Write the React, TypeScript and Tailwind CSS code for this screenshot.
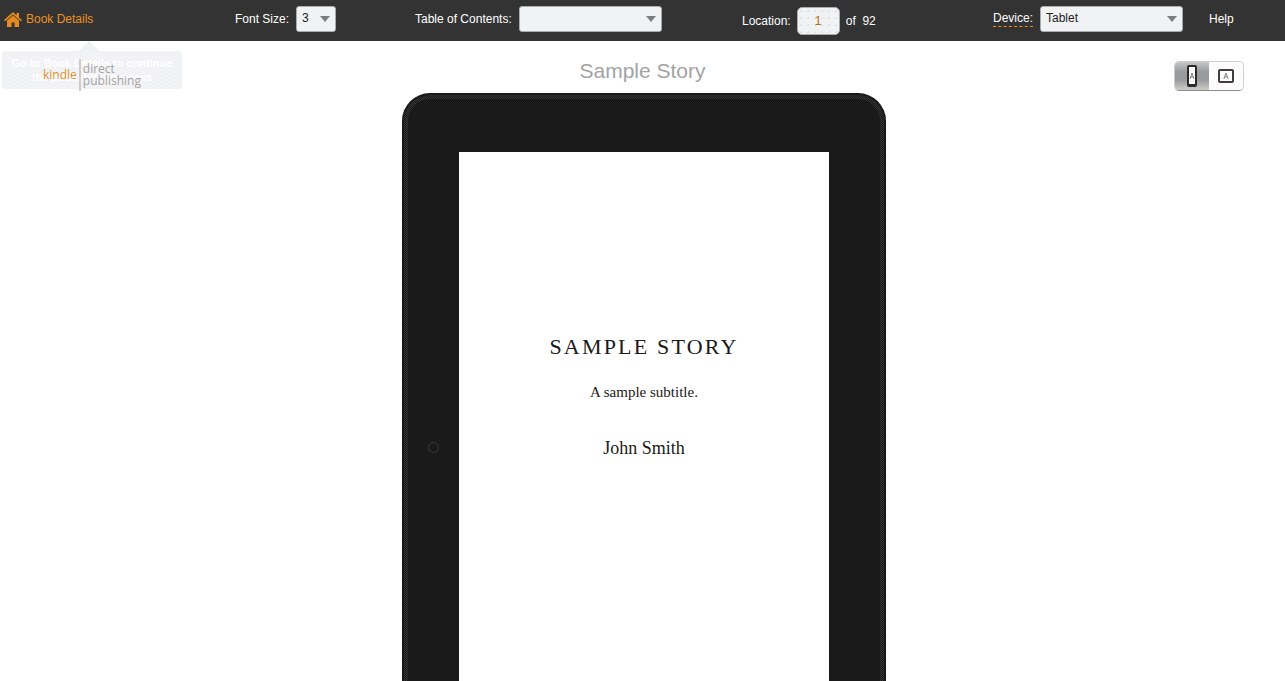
import { useState, type ReactNode } from 'react';

const FIELD =
  'rounded-[3px] border border-[#a9abad] bg-[#f1f2f4] text-[12px] text-[#222] outline-none';

type PickerProps = {
  id: string;
  label: ReactNode;
  width: string;
  options: string[];
};

function Picker({ id, label, width, options }: PickerProps) {
  return (
    <div className="flex items-center gap-[7px] pb-1">
      <label htmlFor={id} className="whitespace-nowrap">
        {label}
      </label>
      <div className={`relative ${width}`}>
        <select id={id} className={`block h-[26px] w-full appearance-none pb-[2px] pl-[5px] leading-4 ${FIELD}`}>
          {options.map((option) => (
            <option key={option}>{option}</option>
          ))}
        </select>
        <svg
          viewBox="0 0 10 6"
          className="pointer-events-none absolute top-[10px] right-[6px] h-[6px] w-[10px]"
          aria-hidden="true"
        >
          <path d="M0 0h10L5 6z" fill="#7d7d7f" />
        </svg>
      </div>
    </div>
  );
}

function HomeIcon() {
  return (
    <svg viewBox="0 0 18 15" className="h-[15px] w-[18px]" fill="#e38b1f" aria-hidden="true">
      <path d="M9 0l3.6 3.2V1H15v4.4L18 8l-1.2 1.2L9 2.4 1.2 9.2 0 8z" />
      <path d="M9 3.4l6 5.2V15h-4.4v-4.4H7.6V15H3V8.6z" />
    </svg>
  );
}

function Toolbar() {
  return (
    <header className="grid h-[41px] grid-cols-[235fr_180fr_327fr_251fr_216fr_76fr] items-center bg-[#333] text-[12px] text-white">
      <a href="#details" className="flex items-center gap-1 pb-[3px] pl-1 text-[#ec9222]">
        <HomeIcon />
        Book Details
      </a>
      <Picker id="font-size" label="Font Size:" width="w-10" options={['3', '4', '5']} />
      <Picker id="contents" label="Table of Contents:" width="w-[143px]" options={['', 'Start']} />
      <div className="flex items-center gap-[6px]">
        <label htmlFor="location">Location:</label>
        <input
          id="location"
          type="text"
          defaultValue="1"
          className="h-7 w-[43px] rounded-[5px] border border-[#a9abad] bg-[#f1f2f4] bg-[radial-gradient(circle,#dfe0e2_1px,transparent_1px)] bg-size-[7px_7px] text-center text-[12px] text-[#b26a12] outline-none"
        />
        <span className="whitespace-pre">of  92</span>
      </div>
      <Picker
        id="device"
        label={<span className="block border-b border-dashed border-[#ec9222] leading-[15px]">Device:</span>}
        width="w-[143px]"
        options={['Tablet', 'Phone', 'Kindle E-reader']}
      />
      <a href="#help" className="pb-[3px]">
        Help
      </a>
    </header>
  );
}

function Branding() {
  return (
    <div className="relative ml-[2px] w-[180px]">
      <svg viewBox="0 0 180 10" className="block h-[10px] w-[180px]" aria-hidden="true">
        <path d="M87 0l10 10H77z" fill="#eff1f3" />
      </svg>
      <p className="rounded-[3px] bg-[#f4f5f6] bg-[conic-gradient(#eff0f3_25%,transparent_0_50%,#eff0f3_0_75%,transparent_0)] bg-size-[4px_4px] pt-[5px] pb-[5px] text-center text-[11px] leading-[14px] font-bold text-white">
        Go to Book Details to continue
        <br />
        the publishing process
      </p>
      <div className="absolute top-[18px] left-[41px] flex items-center font-['Open_Sans',sans-serif] text-[12px]">
        <span className="leading-[14px] text-[#e0912b]">kindle</span>
        <span className="mx-[2px] h-8 w-[2px] bg-[#cfcac4]" />
        <span className="leading-[12px] text-[#a3a3a3]">
          direct
          <br />
          publishing
        </span>
      </div>
    </div>
  );
}

function PortraitIcon() {
  return (
    <svg viewBox="0 0 10 22" className="h-[22px] w-[10px]" aria-hidden="true">
      <rect width="10" height="22" rx="2" fill="#2e2a2c" />
      <rect x="2" y="2" width="6" height="17" fill="#fff" />
      <path d="M3 14L5 8l2 6M3.7 12h2.6" fill="none" stroke="#777" strokeWidth="0.9" />
    </svg>
  );
}

function LandscapeIcon() {
  return (
    <svg viewBox="0 0 16 14" className="h-[14px] w-4" aria-hidden="true">
      <rect x="1" y="1" width="14" height="12" rx="1" fill="#fff" stroke="#433b3e" strokeWidth="2" />
      <path d="M5.8 10L8 4l2.2 6M6.6 8h2.8" fill="none" stroke="#777" strokeWidth="0.9" />
    </svg>
  );
}

function OrientationSwitch() {
  const [portrait, setPortrait] = useState(true);
  const active = 'bg-[linear-gradient(#c5c7c8,#999c9e_35%,#999c9e_65%,#d0cdc7)]';
  return (
    <div className="flex h-[30px] w-[70px] overflow-hidden rounded-[5px] border border-[#cfcdca] border-b-[#8b8b8b]">
      <button
        type="button"
        aria-label="Portrait"
        aria-pressed={portrait}
        onClick={() => setPortrait(true)}
        className={`flex flex-1 items-center justify-center ${portrait ? active : 'bg-[#fcfcfc]'}`}
      >
        <PortraitIcon />
      </button>
      <button
        type="button"
        aria-label="Landscape"
        aria-pressed={!portrait}
        onClick={() => setPortrait(false)}
        className={`flex flex-1 items-center justify-center ${portrait ? 'bg-[#fcfcfc]' : active}`}
      >
        <LandscapeIcon />
      </button>
    </div>
  );
}

function Tablet() {
  return (
    <main className="flex flex-1 justify-center pl-[3px]">
      <section
        aria-label="Book preview"
        className="flex w-[484px] rounded-t-[28px] border-2 border-b-0 border-[#1a1a1a] bg-[#1a1a1a] bg-[conic-gradient(#363636_25%,transparent_0_50%,#363636_0_75%,transparent_0)] bg-size-[2px_2px] px-1 pt-1"
      >
        <div className="flex flex-1 rounded-t-[22px] bg-[#1a1a1a] pt-[53px]">
          <div className="flex w-[51px] justify-center pt-[290px]">
            <span className="size-[11px] rounded-full border border-[#3a3a3a]" />
          </div>
          <article className="flex-1 bg-white pt-[182px] text-center font-['Liberation_Serif',serif] text-[#1a1a1a]">
            <h2 className="text-[22px] leading-[26px] tracking-widest uppercase">Sample Story</h2>
            <p className="mt-[22px] text-[15px] leading-5">A sample subtitle.</p>
            <p className="mt-9 text-[18px] leading-5">John Smith</p>
          </article>
          <div className="w-[51px]" />
        </div>
      </section>
    </main>
  );
}

export default function App() {
  return (
    <div className="flex h-screen flex-col overflow-hidden bg-white font-['Liberation_Sans',Arial,sans-serif]">
      <Toolbar />
      <div className="grid h-[52px] grid-cols-[1fr_auto_1fr] items-start">
        <Branding />
        <h1 className="pt-[17px] text-[21px] leading-[26px] text-[#a3a3a3]">Sample Story</h1>
        <div className="mt-5 mr-[41px] justify-self-end">
          <OrientationSwitch />
        </div>
      </div>
      <Tablet />
    </div>
  );
}
